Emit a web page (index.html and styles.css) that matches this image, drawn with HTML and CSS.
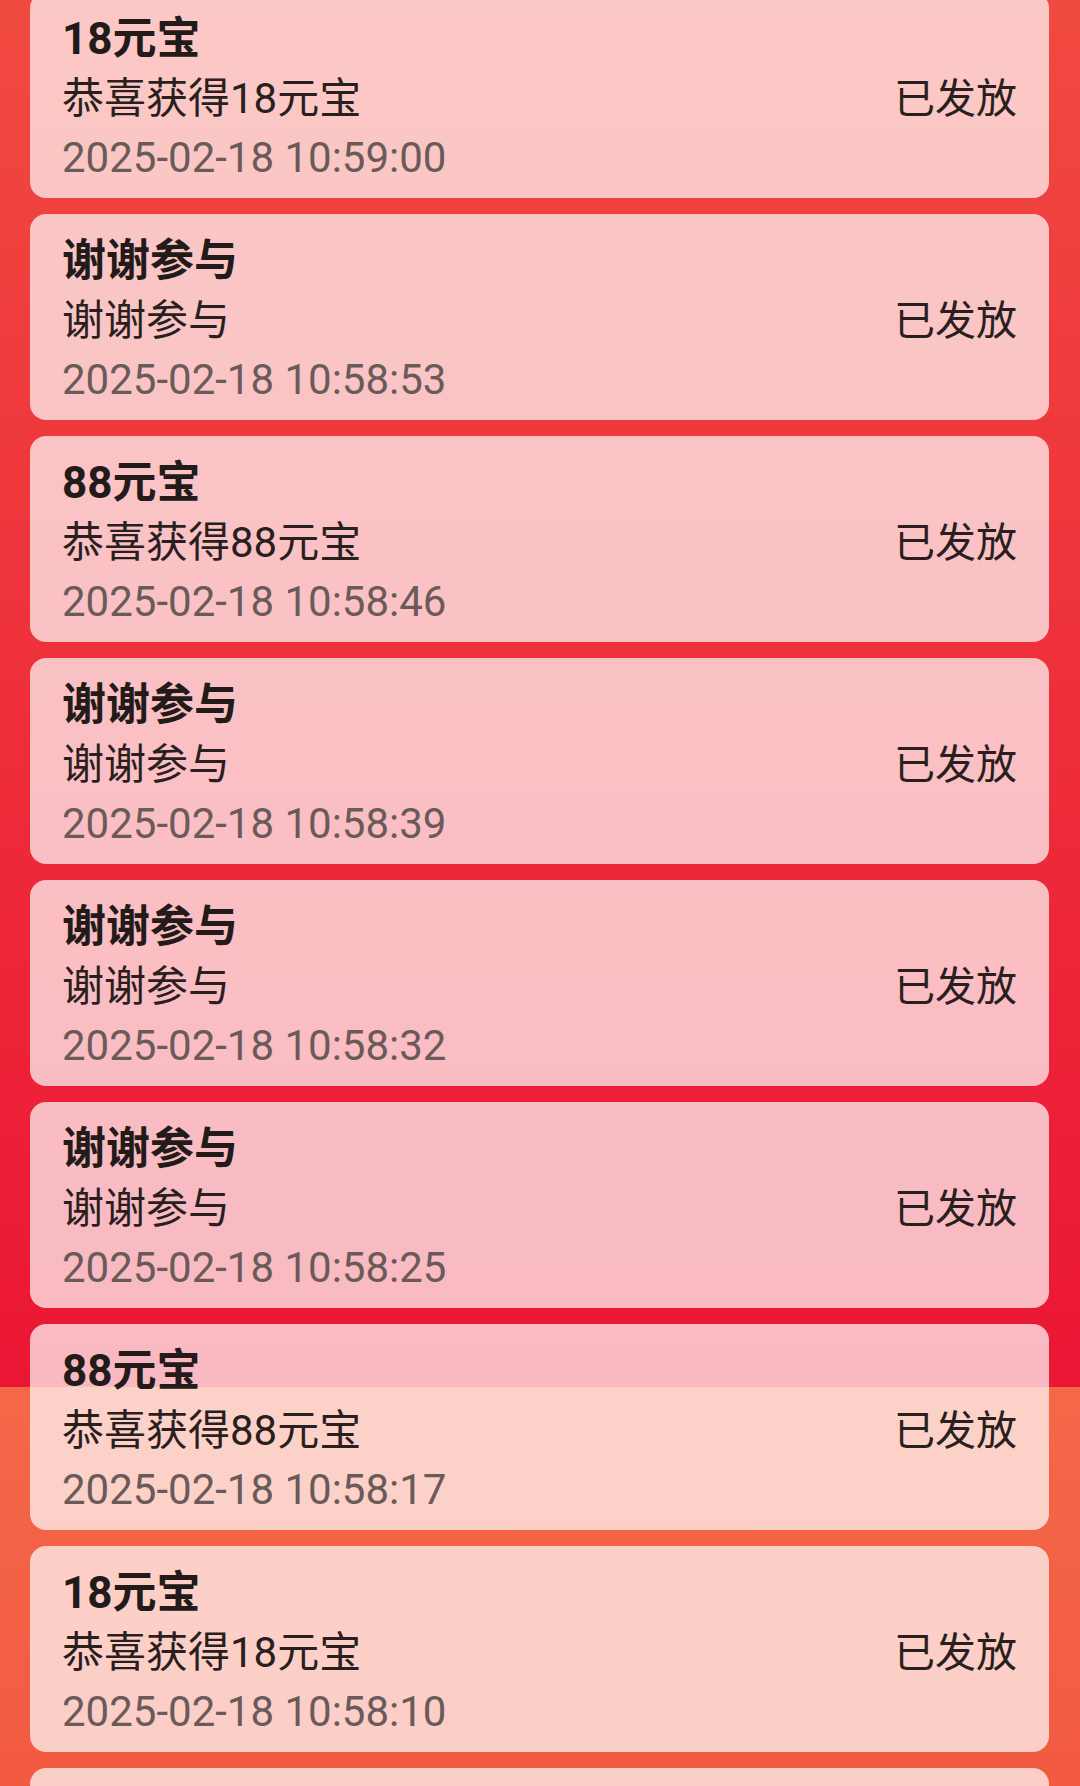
FILE: index.html
```html
<!DOCTYPE html>
<html lang="zh-CN">
<head>
<meta charset="utf-8">
<title>中奖记录</title>
<link rel="stylesheet" href="styles.css">
</head>
<body>
<main class="list">
  <section class="card">
    <div class="info">
      <div class="title">18元宝</div>
      <div class="desc">恭喜获得18元宝</div>
      <div class="time">2025-02-18 10:59:00</div>
    </div>
    <div class="status">已发放</div>
  </section>
  <section class="card">
    <div class="info">
      <div class="title">谢谢参与</div>
      <div class="desc">谢谢参与</div>
      <div class="time">2025-02-18 10:58:53</div>
    </div>
    <div class="status">已发放</div>
  </section>
  <section class="card">
    <div class="info">
      <div class="title">88元宝</div>
      <div class="desc">恭喜获得88元宝</div>
      <div class="time">2025-02-18 10:58:46</div>
    </div>
    <div class="status">已发放</div>
  </section>
  <section class="card">
    <div class="info">
      <div class="title">谢谢参与</div>
      <div class="desc">谢谢参与</div>
      <div class="time">2025-02-18 10:58:39</div>
    </div>
    <div class="status">已发放</div>
  </section>
  <section class="card">
    <div class="info">
      <div class="title">谢谢参与</div>
      <div class="desc">谢谢参与</div>
      <div class="time">2025-02-18 10:58:32</div>
    </div>
    <div class="status">已发放</div>
  </section>
  <section class="card">
    <div class="info">
      <div class="title">谢谢参与</div>
      <div class="desc">谢谢参与</div>
      <div class="time">2025-02-18 10:58:25</div>
    </div>
    <div class="status">已发放</div>
  </section>
  <section class="card">
    <div class="info">
      <div class="title">88元宝</div>
      <div class="desc">恭喜获得88元宝</div>
      <div class="time">2025-02-18 10:58:17</div>
    </div>
    <div class="status">已发放</div>
  </section>
  <section class="card">
    <div class="info">
      <div class="title">18元宝</div>
      <div class="desc">恭喜获得18元宝</div>
      <div class="time">2025-02-18 10:58:10</div>
    </div>
    <div class="status">已发放</div>
  </section>
  <section class="card card-partial"></section>
</main>
</body>
</html>
```
FILE: styles.css
```css
html, body {
  margin: 0;
  padding: 0;
}
body {
  width: 1080px;
  height: 1786px;
  overflow: hidden;
  font-family: Roboto, "Noto Sans CJK SC", sans-serif;
  background: linear-gradient(180deg, #f04a40 0px, #ee2f3a 700px, #eb1634 1387px, #f46848 1387px, #f25a42 1786px);
}
.list {
  display: flex;
  flex-direction: column;
  gap: 16px;
  padding: 0 31px 0 30px;
  margin-top: -8px;
}
.card {
  display: flex;
  align-items: center;
  justify-content: space-between;
  height: 206px;
  box-sizing: border-box;
  padding: 18px 32px 11px 32px;
  border-radius: 16px;
  background: rgba(255, 255, 255, 0.7);
  flex-shrink: 0;
}
.info {
  display: flex;
  flex-direction: column;
  align-self: stretch;
}
.title {
  font-size: 44px;
  font-weight: 700;
  line-height: 59px;
  color: #231a1a;
}
.desc {
  font-size: 42px;
  line-height: 59px;
  color: #2a1f1f;
}
.time {
  font-size: 42px;
  line-height: 59px;
  color: #6a5a5a;
}
.status {
  font-size: 41px;
  color: #2a1f1f;
  margin-bottom: 8px;
}
```
